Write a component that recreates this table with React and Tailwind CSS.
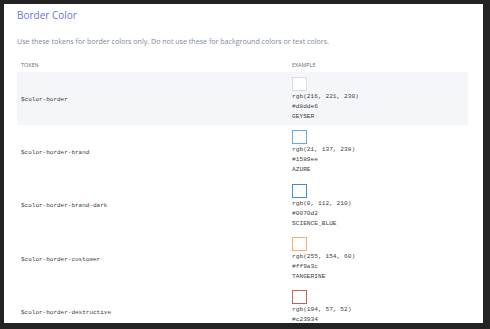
import React from "react";

const tokens = [
  { name: "$color-border", rgb: "rgb(216, 221, 230)", hex: "#d8dde6", label: "GEYSER", color: "#d8dde6" },
  { name: "$color-border-brand", rgb: "rgb(21, 137, 238)", hex: "#1589ee", label: "AZURE", color: "#5fa9f0" },
  { name: "$color-border-brand-dark", rgb: "rgb(0, 112, 210)", hex: "#0070d2", label: "SCIENCE_BLUE", color: "#3f8fd8" },
  { name: "$color-border-customer", rgb: "rgb(255, 154, 60)", hex: "#ff9a3c", label: "TANGERINE", color: "#f7b071" },
  { name: "$color-border-destructive", rgb: "rgb(194, 57, 52)", hex: "#c23934", label: "", color: "#c9605b" },
];

const TokenRow = ({ token, shaded }) => {
  return (
    <div className={`grid h-[53.3px] shrink-0 grid-cols-[275px_1fr] ${shaded ? "bg-[#f4f6f9]" : ""}`}>
      {/* token name, vertically centred */}
      <div className="flex items-center pl-[4px] pt-[1px] font-['Liberation_Mono',monospace] text-[6px] text-[#3e3e3e]">
        {token.name}
      </div>
      <div className="pt-[5px] font-['Liberation_Mono',monospace] text-[6.2px] leading-[10px] text-[#444]">
        <div className="h-[14px] w-[15px] border-[1.5px] bg-white" style={{ borderColor: token.color }} />
        <div className="mt-[1px]">{token.rgb}</div>
        <div>{token.hex}</div>
        {token.label && <div>{token.label}</div>}
      </div>
    </div>
  );
};

export default function App() {
  return (
    <div className="h-[329px] w-[490px] overflow-hidden bg-[#232323] pb-[6px] pl-[4px] pr-[7px] pt-[4px]">
      <div className="flex h-full flex-col overflow-hidden bg-white pl-[13px] pr-[15px] pt-[4px] font-['Open_Sans',sans-serif]">
        <p className="text-[10px] leading-[14px] text-[#6e73e2]">Border Color</p>
        <p className="mt-[14px] text-[7.1px] leading-[10px] text-[#7d8aa8]">
          Use these tokens for border colors only. Do not use these for background colors or text colors.
        </p>

        {/* table header */}
        <div className="mt-[15px] grid grid-cols-[275px_1fr] pb-[3px] text-[5.4px] leading-[8px] text-[#6b6d70]">
          <div className="pl-[4px]">TOKEN</div>
          <div>EXAMPLE</div>
        </div>

        {tokens.map((token, i) => (
          <TokenRow key={token.name} token={token} shaded={i === 0} />
        ))}
      </div>
    </div>
  );
}
